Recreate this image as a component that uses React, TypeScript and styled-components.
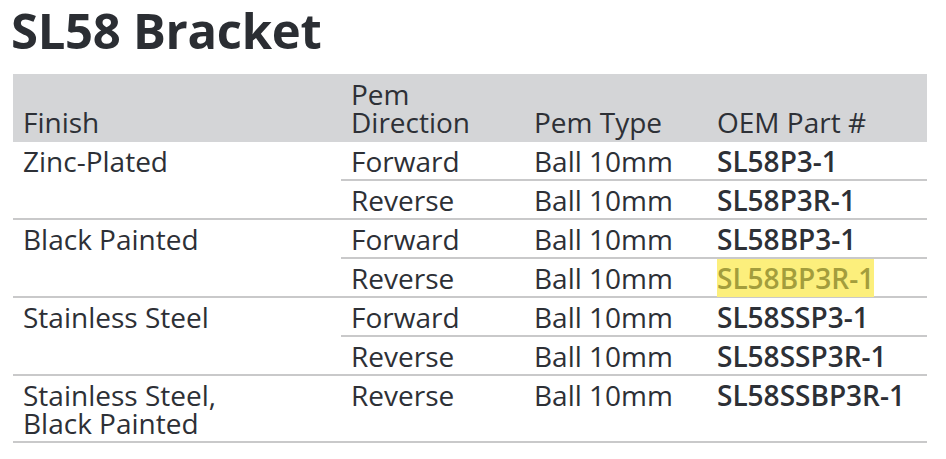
import React from "react";
import styled, { createGlobalStyle } from "styled-components";

const Global = createGlobalStyle`
  html, body { margin: 0; padding: 0; background: #ffffff; }
  body { font-family: "Open Sans", "Noto Sans", sans-serif; color: #2d3036; }
`;

const Page = styled.div`
  width: 946px;
  height: 459px;
  box-sizing: border-box;
  padding: 0 19px 0 13px;
  display: flex;
  flex-direction: column;
  overflow: hidden;
`;

const Title = styled.h1`
  margin: 0 0 0 -2px;
  height: 74px;
  font-size: 49px;
  font-weight: 700;
  line-height: 60px;
  letter-spacing: -0.3px;
  color: #2b2e33;
`;

const Table = styled.table`
  width: 914px;
  border-collapse: collapse;
  table-layout: fixed;
  font-size: 28px;
  line-height: 28px;
`;

const HeadRow = styled.tr`
  background: #d4d5d7;
`;

const HeadCell = styled.th<{ $w: number }>`
  box-sizing: border-box;
  width: ${(p) => p.$w}px;
  text-align: left;
  vertical-align: bottom;
  font-weight: 500;
  padding: 6px 10px 6px 10px;
  color: #2d3036;
  white-space: nowrap;
`;

const Cell = styled.td<{ $line?: boolean }>`
  vertical-align: top;
  padding: 5px 10px 4px 10px;
  border-bottom: ${(p) => (p.$line ? "2px solid #c9c9ca" : "none")};
  white-space: nowrap;
`;

const PartCell = styled(Cell)`
  font-weight: 600;
`;

const Highlight = styled.span`
  background: #fcef7c;
  color: #a39d3c;
`;

type Row = {
  finish?: string[];
  span?: number;
  dir: string;
  part: string;
  hl?: boolean;
};

const rows: Row[] = [
  { finish: ["Zinc-Plated"], span: 2, dir: "Forward", part: "SL58P3-1" },
  { dir: "Reverse", part: "SL58P3R-1" },
  { finish: ["Black Painted"], span: 2, dir: "Forward", part: "SL58BP3-1" },
  { dir: "Reverse", part: "SL58BP3R-1", hl: true },
  { finish: ["Stainless Steel"], span: 2, dir: "Forward", part: "SL58SSP3-1" },
  { dir: "Reverse", part: "SL58SSP3R-1" },
  { finish: ["Stainless Steel,", "Black Painted"], span: 1, dir: "Reverse", part: "SL58SSBP3R-1" },
];

export default function App() {
  return (
    <>
      <Global />
      <Page>
        <Title>SL58 Bracket</Title>
        <Table>
          <thead>
            <HeadRow>
              <HeadCell $w={328}>Finish</HeadCell>
              <HeadCell $w={183}>
                Pem
                <br />
                Direction
              </HeadCell>
              <HeadCell $w={183}>Pem Type</HeadCell>
              <HeadCell $w={220}>OEM Part #</HeadCell>
            </HeadRow>
          </thead>
          <tbody>
            {rows.map((r, i) => (
              <tr key={i}>
                {r.finish && (
                  <Cell rowSpan={r.span} $line>
                    {r.finish.map((f, j) => (
                      <React.Fragment key={j}>
                        {j > 0 && <br />}
                        {f}
                      </React.Fragment>
                    ))}
                  </Cell>
                )}
                <Cell $line>{r.dir}</Cell>
                <Cell $line>Ball 10mm</Cell>
                <PartCell $line>{r.hl ? <Highlight>{r.part}</Highlight> : r.part}</PartCell>
              </tr>
            ))}
          </tbody>
        </Table>
      </Page>
    </>
  );
}
